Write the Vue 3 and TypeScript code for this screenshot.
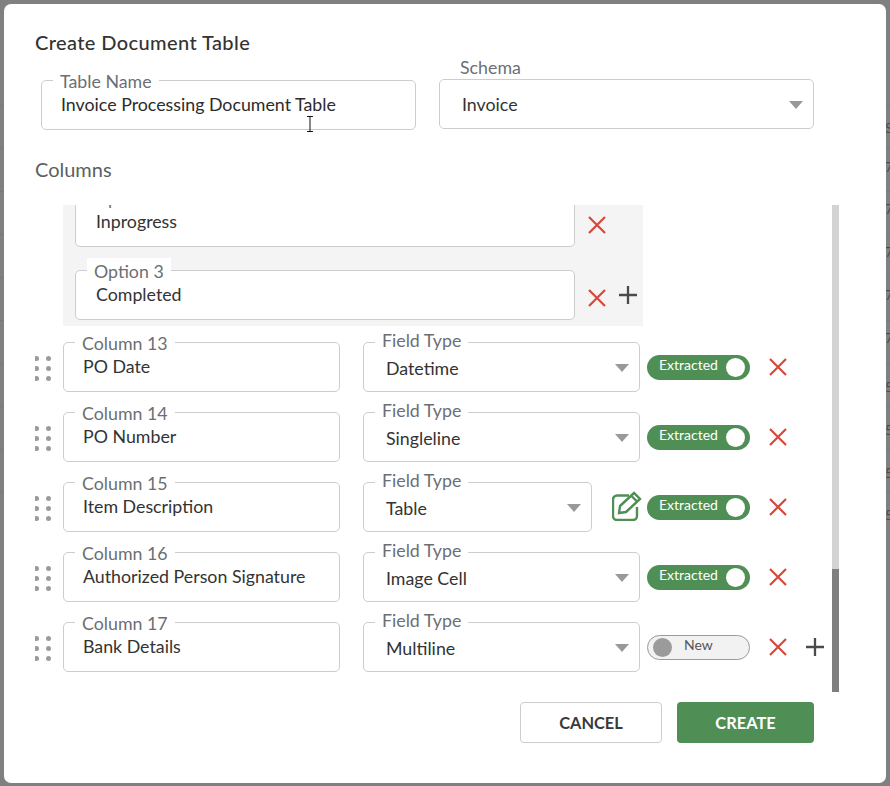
<script setup lang="ts">
interface Row {
  label: string
  value: string
  type: string
  edit?: boolean
  extracted: boolean
  add?: boolean
}

const rows: Row[] = [
  { label: 'Column 13', value: 'PO Date', type: 'Datetime', extracted: true },
  { label: 'Column 14', value: 'PO Number', type: 'Singleline', extracted: true },
  { label: 'Column 15', value: 'Item Description', type: 'Table', edit: true, extracted: true },
  { label: 'Column 16', value: 'Authorized Person Signature', type: 'Image Cell', extracted: true },
  { label: 'Column 17', value: 'Bank Details', type: 'Multiline', extracted: false, add: true },
]

const options = [
  { label: 'Option 2', value: 'Inprogress' },
  { label: 'Option 3', value: 'Completed', add: true },
]

// bits of the page behind the modal that stick out on the right
const behind = [
  { y: 128, ch: 'S' },
  { y: 167, ch: '7' },
  { y: 209, ch: '7' },
  { y: 252, ch: '7' },
  { y: 295, ch: '7' },
  { y: 338, ch: '7' },
  { y: 387, ch: '5' },
  { y: 430, ch: '5' },
  { y: 473, ch: '5' },
  { y: 515, ch: '5' },
]
</script>

<template>
  <div class="backdrop">
    <div class="page-behind">
      <span v-for="b in behind" :key="b.y" :style="{ top: b.y - 8 + 'px' }">{{ b.ch }}</span>
    </div>

    <div class="dialog">
      <h2 class="title">Create Document Table</h2>

      <div class="top-fields">
        <div class="box name-box">
          <span class="notch">Table Name</span>
          <span class="value dark">Invoice Processing Document Table</span>
        </div>
        <div class="box schema-box">
          <span class="over-label">Schema</span>
          <span class="value">Invoice</span>
          <i class="caret" />
        </div>
      </div>

      <h3 class="columns-title">Columns</h3>

      <div class="scroller">
        <div class="scroll-content">
          <div class="options">
            <div v-for="opt in options" :key="opt.label" class="option-row">
              <div class="box option-box">
                <span class="notch">{{ opt.label }}</span>
                <span class="value">{{ opt.value }}</span>
              </div>
              <svg class="icon-x" viewBox="0 0 18 18"><path d="M1 1L17 17M17 1L1 17" /></svg>
              <svg v-if="opt.add" class="icon-plus" viewBox="0 0 18 18"><path d="M9 0V18M0 9H18" /></svg>
            </div>
          </div>

          <div v-for="row in rows" :key="row.label" class="column-row">
            <div class="drag">
              <i v-for="n in 6" :key="n" />
            </div>
            <div class="box col-box">
              <span class="notch">{{ row.label }}</span>
              <span class="value">{{ row.value }}</span>
            </div>
            <div class="box type-box" :class="{ short: row.edit }">
              <span class="notch">Field Type</span>
              <span class="value">{{ row.type }}</span>
              <i class="caret" />
            </div>
            <svg v-if="row.edit" class="icon-edit" viewBox="0 0 30 30">
              <path d="M17 4.5H5a4 4 0 0 0-4 4V25a4 4 0 0 0 4 4h16a4 4 0 0 0 4-4V16" />
              <path d="M8 15L22 2l6 6L14 21l-7 1z M19.5 5l6 6" />
            </svg>
            <div class="toggle" :class="{ on: row.extracted }">
              <template v-if="row.extracted">
                <span>Extracted</span>
                <i />
              </template>
              <template v-else>
                <i />
                <span>New</span>
              </template>
            </div>
            <svg class="icon-x" viewBox="0 0 18 18"><path d="M1 1L17 17M17 1L1 17" /></svg>
            <svg v-if="row.add" class="icon-plus" viewBox="0 0 18 18"><path d="M9 0V18M0 9H18" /></svg>
          </div>
        </div>
        <div class="scrollbar"><div class="thumb" /></div>
      </div>

      <div class="actions">
        <button class="btn cancel">CANCEL</button>
        <button class="btn create">CREATE</button>
      </div>
    </div>

    <!-- text cursor over the name field -->
    <svg class="ibeam" viewBox="0 0 8 16"><path d="M1 .5H7M4 .5V15.5M1 15.5H7" /></svg>
  </div>
</template>

<style scoped>
.backdrop {
  position: relative;
  width: 890px;
  height: 786px;
  box-sizing: border-box;
  padding: 4px 4px 3px;
  background: #808080;
  overflow: hidden;
  font-family: Lato, "Open Sans", sans-serif;
}

.page-behind {
  position: absolute;
  inset: 0;
  background: repeating-linear-gradient(to bottom, #797979 0 1px, transparent 1px 43px) 0 105px no-repeat;
  background-size: 100% 430px;
}

.page-behind span {
  position: absolute;
  left: 885px;
  font-size: 14px;
  line-height: 16px;
  color: #4d4d4d;
}

.dialog {
  position: relative;
  height: 100%;
  box-sizing: border-box;
  padding: 26px 0 0 31px;
  background: #fff;
  border-radius: 7px;
}

.title {
  margin: 0;
  font-size: 20px;
  line-height: 24px;
  font-weight: 500;
  letter-spacing: 0.4px;
  color: #333;
}

.top-fields {
  display: flex;
  gap: 23px;
  margin: 26px 0 0 6px;
}

.box {
  position: relative;
  display: flex;
  align-items: center;
  box-sizing: border-box;
  height: 50px;
  background: #fff;
  border: 1px solid #cdcdcd;
  border-radius: 5px;
  font-size: 17.8px;
}

.name-box {
  width: 375px;
  padding-left: 19px;
}

.schema-box {
  width: 375px;
  margin-top: -1px;
  padding: 1px 0 0 22px;
}

.notch {
  position: absolute;
  top: -13px;
  left: 11px;
  padding: 0 7px;
  line-height: 26px;
  background: #fff;
  font-size: 17.8px;
  color: #6b6f75;
  white-space: nowrap;
}

.type-box .notch {
  top: -17px;
  line-height: 29px;
}

.over-label {
  position: absolute;
  top: -25px;
  left: 20px;
  line-height: 24px;
  font-size: 17.8px;
  color: #6b6f75;
}

.value {
  margin-top: -2px;
  color: #333;
  white-space: nowrap;
}

.value.dark {
  color: #2b2b2b;
}

.caret {
  position: absolute;
  top: 21px;
  right: 10px;
  border-style: solid;
  border-width: 8px 7px 0;
  border-color: #999 transparent transparent;
}

.columns-title {
  margin: 27px 0 24px;
  font-size: 20px;
  line-height: 24px;
  font-weight: 400;
  color: #5c5f62;
}

.scroller {
  display: flex;
  height: 487px;
}

.scroll-content {
  width: 797px;
  overflow: hidden;
}

.options {
  width: 580px;
  margin: -8px 0 0 28px;
  padding: 0 0 6px 12px;
  box-sizing: border-box;
  background: #f4f4f4;
}

.option-row {
  display: flex;
  align-items: center;
  height: 50px;
  margin-bottom: 23px;
}

.option-row:last-child {
  margin-bottom: 0;
}

.option-box {
  width: 500px;
  padding-left: 20px;
  flex: none;
}

.option-row .icon-x {
  margin: 5px 0 0 13px;
}

.option-row .icon-plus {
  margin-left: 13px;
}

.column-row {
  display: flex;
  align-items: center;
  height: 50px;
  margin-top: 20px;
}

.options + .column-row {
  margin-top: 16px;
}

.drag {
  display: grid;
  grid-template-columns: 5px 5px;
  gap: 5px 7px;
  width: 28px;
  margin: 2px 1px 0 -1px;
  box-sizing: border-box;
}

.drag i {
  width: 5px;
  height: 5px;
  border-radius: 50%;
  background: #9b9b9b;
}

.col-box {
  width: 277px;
  flex: none;
  padding-left: 19px;
}

.type-box {
  width: 277px;
  flex: none;
  margin-left: 23px;
  padding: 4px 0 0 22px;
}

.type-box.short {
  width: 229px;
}

.toggle {
  display: flex;
  align-items: center;
  box-sizing: border-box;
  width: 103px;
  height: 25px;
  margin-left: 7px;
  border-radius: 13px;
  font-size: 14px;
  flex: none;
}

.toggle.on {
  padding: 0 5px 0 12px;
  justify-content: space-between;
  background: #4f8e55;
  color: #fff;
}

.toggle:not(.on) {
  gap: 12px;
  padding-left: 5px;
  background: #f2f2f2;
  border: 1px solid #9a9a9a;
  color: #555;
}

.toggle i {
  width: 19px;
  height: 19px;
  border-radius: 50%;
  background: #fff;
}

.toggle:not(.on) i {
  background: #9b9b9b;
}

.toggle:not(.on) span {
  margin-top: -5px;
}

.toggle.on span {
  margin-top: -6px;
}

.icon-x {
  flex: none;
  width: 18px;
  height: 18px;
  margin-left: 19px;
  fill: none;
  stroke: #d8473a;
  stroke-width: 2.2;
}

.icon-plus {
  flex: none;
  width: 18px;
  height: 18px;
  margin-left: 19px;
  fill: none;
  stroke: #4a4a4a;
  stroke-width: 2.3;
}

.icon-edit {
  flex: none;
  width: 30px;
  height: 30px;
  margin: -2px -2px 0 20px;
  fill: none;
  stroke: #4f8e55;
  stroke-width: 2.4;
}

.scrollbar {
  display: flex;
  align-items: flex-end;
  width: 7px;
  height: 100%;
  background: #d3d3d3;
}

.thumb {
  width: 100%;
  height: 123px;
  background: #7f7f7f;
}

.actions {
  display: flex;
  justify-content: flex-end;
  gap: 15px;
  width: 779px;
  margin-top: 10px;
}

.btn {
  height: 41px;
  border-radius: 4px;
  font-family: inherit;
  font-size: 16.4px;
  font-weight: 700;
}

.cancel {
  width: 142px;
  background: #fff;
  border: 1px solid #cdcdcd;
  color: #3a3a3a;
}

.create {
  width: 137px;
  background: #4f8e55;
  border: 0;
  color: #fff;
}

.ibeam {
  position: absolute;
  top: 116px;
  left: 306px;
  width: 8px;
  height: 16px;
  fill: none;
  stroke: #111;
  stroke-width: 1;
}
</style>
